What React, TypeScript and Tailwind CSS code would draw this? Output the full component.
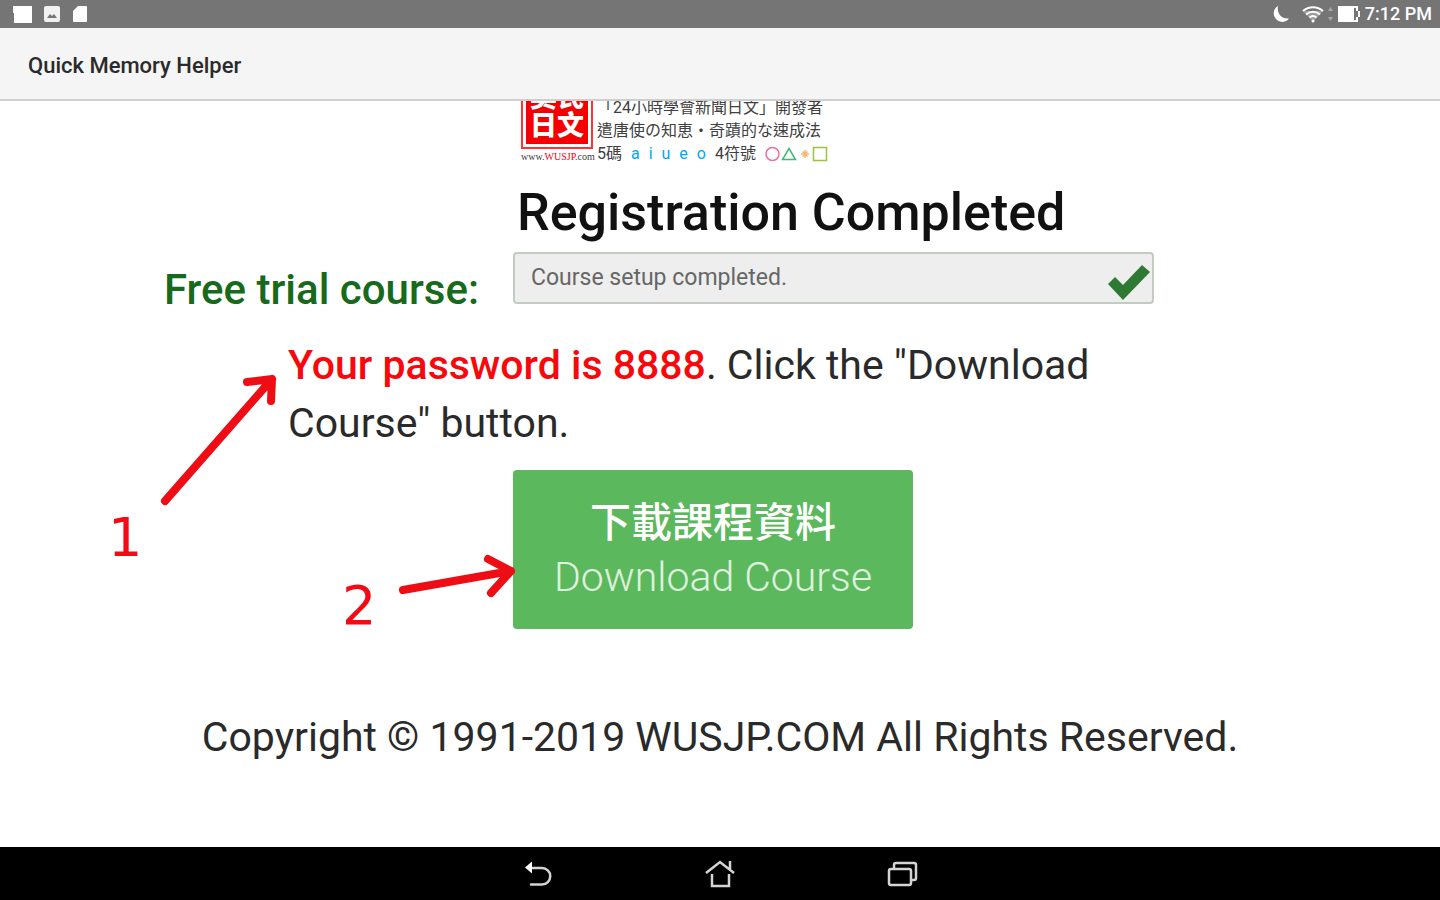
const VOWELS = ["a", "i", "u", "e", "o"];

function StatusBar() {
  return (
    <div className="flex h-7 items-center justify-between bg-[#757575] pl-3 pr-2 text-white">
      <div className="flex items-center gap-3">
        <svg width="20" height="18" viewBox="0 0 20 18" fill="currentColor">
          <path d="M1 1h19v17H2V8H1z" />
        </svg>
        <svg width="16" height="16" viewBox="0 0 16 16">
          <rect width="16" height="16" rx="2" fill="currentColor" opacity="0.9" />
          <path d="M3 12l3-4 2 2 2-2 3 4z" fill="#757575" />
        </svg>
        <svg width="16" height="16" viewBox="0 0 16 16" fill="currentColor">
          <path d="M6 0h8a1 1 0 0 1 1 1v14a1 1 0 0 1-1 1H2a1 1 0 0 1-1-1V5z" />
        </svg>
      </div>
      <div className="flex items-center">
        <svg className="mr-3" width="18" height="18" viewBox="0 0 18 18" fill="currentColor">
          <path d="M6 1a8.500 8.500 0 1 0 11 12.500C10 14.500 4.500 9 6 1z" />
        </svg>
        <svg width="22" height="18" viewBox="0 0 22 18" fill="none" stroke="currentColor" strokeWidth="2">
          <path d="M1 6a15 15 0 0 1 20 0M4 9.500a10.500 10.500 0 0 1 14 0M7.500 12.500a5.500 5.500 0 0 1 7 0" />
          <circle cx="11" cy="16" r="1.500" fill="currentColor" stroke="none" />
          <path d="M1 6l10 11L21 6z" fill="currentColor" stroke="none" opacity="0.3" />
        </svg>
        <svg className="mx-1" width="5" height="16" viewBox="0 0 5 16" fill="#a8a8a8">
          <path d="M2.500 1L5 5H0zM2.500 15L5 11H0z" />
        </svg>
        <svg className="mr-1" width="24" height="18" viewBox="0 0 24 18">
          <path d="M1 1h20v5h2v6h-2v5H1z" fill="currentColor" />
          <path d="M17 3h2v3h2v6h-2v3h-2z" fill="#757575" />
        </svg>
        <span className="text-lg font-medium leading-7">7:12 PM</span>
      </div>
    </div>
  );
}

function Banner() {
  return (
    <div className="flex h-16 items-end gap-1 overflow-hidden pl-2">
      <div className="w-[72px] shrink-0">
        <div className="border-2 border-[#f33] p-[3px]">
          <div className="grid grid-cols-2 justify-items-center bg-[#f40000] px-1 pb-1 text-[27px] font-black leading-7 text-white">
            <span>吳</span>
            <span>氏</span>
            <span>日</span>
            <span>文</span>
          </div>
        </div>
        <p className="text-center font-['Liberation_Serif',serif] text-[10px] leading-[16px] text-neutral-700">
          www.<span className="text-red-600">WUSJP</span>.com
        </p>
      </div>
      <div className="w-[232px] shrink-0 whitespace-nowrap text-base leading-[23px] text-neutral-700">
        <p>「24小時學會新聞日文」開發者</p>
        <p>遣唐使の知恵・奇蹟的な速成法</p>
        <div className="flex items-center justify-between">
          <span>5碼</span>
          {VOWELS.map((v) => (
            <span key={v} className="text-sky-500">
              {v}
            </span>
          ))}
          <span>4符號</span>
          <svg width="64" height="16" viewBox="0 0 64 16" fill="none" strokeWidth="1.500">
            <circle cx="7.500" cy="8" r="6.500" stroke="#f06ea0" />
            <path d="M24 2.500l6.500 11h-13z" stroke="#3fb878" />
            <path d="M40 4v8M36 8h8M37.500 5.500l5 5M42.500 5.500l-5 5" stroke="#f5b878" />
            <rect x="48.500" y="1.500" width="13" height="13" stroke="#9cc43c" />
          </svg>
        </div>
      </div>
    </div>
  );
}

function Annotations() {
  return (
    <div className="pointer-events-none absolute inset-0 font-['DejaVu_Sans',sans-serif] text-[54px] leading-none text-[#f40a14]">
      <svg
        className="absolute left-0 top-0"
        width="420"
        height="540"
        viewBox="0 0 420 540"
        fill="none"
        stroke="#ee0d15"
        strokeWidth="8"
        strokeLinecap="round"
        strokeLinejoin="round"
      >
        <path d="M65 400L172 278M147 281L172 278L171 300" />
        <path d="M303 489L411 470M388 458L411 470L391 492" />
      </svg>
      <span className="absolute left-2 top-[410px]">1</span>
      <span className="absolute left-[242px] top-[478px]">2</span>
    </div>
  );
}

function NavBar() {
  return (
    <nav className="flex h-[53px] items-center justify-center gap-[150px] bg-black text-[#d4d4d4]">
      <button type="button" aria-label="Back">
        <svg width="32" height="32" viewBox="0 0 32 32" fill="none" stroke="currentColor" strokeWidth="2.500">
          <path d="M9 10h11a8 8 0 0 1 0 16.500H9" strokeLinecap="round" />
          <path d="M3 9.500l7-6v12z" fill="white" stroke="none" />
        </svg>
      </button>
      <button type="button" aria-label="Home">
        <svg width="32" height="32" viewBox="0 0 32 32" fill="none" stroke="currentColor" strokeWidth="2.500">
          <path d="M2 15L16 4l14 11M26 12V3M8 16v12h17V16" />
        </svg>
      </button>
      <button type="button" aria-label="Recent apps">
        <svg width="32" height="32" viewBox="0 0 32 32" fill="none" stroke="currentColor" strokeWidth="2.500">
          <rect x="3" y="11" width="22" height="16" rx="2" />
          <path d="M8 10V7a2 2 0 0 1 2-2h18a2 2 0 0 1 2 2v13a2 2 0 0 1-2 2h-2" />
        </svg>
      </button>
    </nav>
  );
}

export default function App() {
  return (
    <div className="flex min-h-screen flex-col bg-white font-[Roboto,'Noto_Sans_CJK_TC',sans-serif] text-[#2a2a2a]">
      <StatusBar />
      <header className="flex h-[73px] items-center border-b-2 border-[#cfcfcf] bg-[#f5f5f5] px-7 pt-1">
        <h1 className="text-[22px] font-medium">Quick Memory Helper</h1>
      </header>

      <main className="relative mx-auto w-full max-w-[1240px] flex-1 px-16">
        <div className="grid grid-cols-[349px_641px]">
          <div className="col-start-2">
            <Banner />
            <h2 className="mt-[13px] pl-1 text-[52px] font-medium leading-[70px] text-[#111]">
              Registration Completed
            </h2>
          </div>
          <label
            htmlFor="course"
            className="mt-3 text-[42px] font-medium leading-[60px] text-[#17691c]"
          >
            Free trial course:
          </label>
          <div className="relative mt-1">
            <input
              id="course"
              readOnly
              value="Course setup completed."
              className="h-[52px] w-full rounded border-2 border-[#c3cbc3] bg-[#eee] pb-[2px] pl-4 pr-14 text-[23px] text-[#666]"
            />
            <svg className="absolute right-1 top-3" width="42" height="36" viewBox="0 0 42 36" fill="#2f7a33">
              <path d="M0 20l7-7 8 8L34 1l8 7-27 28z" />
            </svg>
          </div>
        </div>

        <p className="ml-[124px] mt-4 max-w-[866px] text-[41px] leading-[58px]">
          <strong className="font-medium text-[#f8070c]">Your password is 8888</strong>. Click the "Download
          Course" button.
        </p>

        <button
          type="button"
          className="ml-[349px] mt-[18px] block h-[159px] w-[400px] rounded bg-[#5cb85c] text-[41px] font-light leading-[54px] text-white"
        >
          <span className="block font-medium">下載課程資料</span>
          <span className="text-white/80">Download Course</span>
        </button>

        <footer className="mt-20 text-center text-[41px] leading-[56px]">
          Copyright © 1991-2019 WUSJP.COM All Rights Reserved.
        </footer>
        <Annotations />
      </main>

      <NavBar />
    </div>
  );
}
